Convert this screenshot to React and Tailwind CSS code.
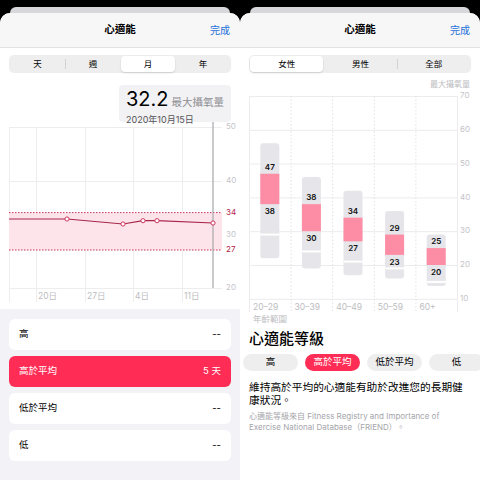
import clsx from "clsx";

const RED = "#ff2d55";

function Sheet({ children }) {
  return (
    <div className="flex h-full w-[240px] flex-col">
      <div className="h-[13px] px-[10px] pt-[7px]">
        <div className="h-[6px] rounded-t-[8px] bg-[#d8d8dc]" />
      </div>
      <div className="flex flex-1 flex-col overflow-hidden rounded-t-[10px] bg-white">{children}</div>
    </div>
  );
}

function Header() {
  return (
    <div className="grid h-[35px] grid-cols-3 items-center border-b border-[#e2e2e4] bg-[#f7f7f7] px-[10px]">
      <span />
      <span className="text-center text-[10.5px] font-semibold text-black">心適能</span>
      <span className="text-right text-[10px] text-[#1d6fd8]">完成</span>
    </div>
  );
}

function Segmented({ items, active }) {
  return (
    <div className="px-[9px] pt-[7px]">
      <div className="flex h-[18px] rounded-[5px] bg-[#eeeeef] p-[1px]">
        {items.map((it, i) => (
          <div key={it} className="flex flex-1 items-center">
            {i > 0 && (
              <div
                className={clsx(
                  "h-[10px] w-px",
                  i !== active && i - 1 !== active ? "bg-[#d2d2d6]" : "bg-transparent"
                )}
              />
            )}
            <div
              className={clsx(
                "flex h-full flex-1 items-center justify-center text-[8.5px] text-black",
                i === active && "rounded-[4px] bg-white shadow-[0_1px_2px_rgba(0,0,0,0.15)]"
              )}
            >
              {it}
            </div>
          </div>
        ))}
      </div>
    </div>
  );
}

function LeftChart() {
  const pts = [
    [9, 219],
    [67, 219],
    [123, 224],
    [143, 220.7],
    [157, 220.7],
    [213, 223],
  ];
  const yLabels = [
    ["50", 127, "#c4c4c8"],
    ["40", 181, "#c4c4c8"],
    ["34", 213, "#b3234a"],
    ["30", 234.5, "#c4c4c8"],
    ["27", 250, "#b3234a"],
    ["20", 288, "#c4c4c8"],
  ];
  const xLabels = [
    ["20日", 38],
    ["27日", 87],
    ["4日", 135],
    ["11日", 184],
  ];
  return (
    <svg width="240" height="187" viewBox="0 122 240 187" className="block">
      {[127.5, 181.5, 288.5].map((y) => (
        <line key={y} x1="9" x2="222" y1={y} y2={y} stroke="#ededee" strokeWidth="1" />
      ))}
      {[9.5, 36.5, 85.5, 133.5, 182.5].map((x) => (
        <line key={x} x1={x} x2={x} y1="127" y2="302" stroke="#ededee" strokeWidth="1" />
      ))}
      <rect x="9" y="212.6" width="213" height="37.4" fill="#fde4ea" />
      <line x1="9" x2="222" y1="212.6" y2="212.6" stroke="#c7335c" strokeWidth="1" strokeDasharray="1.5 1.5" />
      <line x1="9" x2="222" y1="250" y2="250" stroke="#c7335c" strokeWidth="1" strokeDasharray="1.5 1.5" />
      <line x1="213" x2="213" y1="122" y2="288" stroke="#adadb1" strokeWidth="1.3" />
      <polyline points={pts.map((p) => p.join(",")).join(" ")} fill="none" stroke="#a8264b" strokeWidth="1.2" />
      {pts.slice(1).map(([x, y]) => (
        <circle key={x} cx={x} cy={y} r="2.1" fill="white" stroke="#d0365f" strokeWidth="1" />
      ))}
      {yLabels.map(([t, y, c]) => (
        <text key={t} x="226" y={y} fontSize="8" fill={c} dominantBaseline="middle">
          {t}
        </text>
      ))}
      {xLabels.map(([t, x]) => (
        <text key={t} x={x} y="297" fontSize="8.5" fill="#bdbdc1" dominantBaseline="middle">
          {t}
        </text>
      ))}
    </svg>
  );
}

const bars = [
  { top: 56, bottom: 22, hi: 47, lo: 38, gap: 29, label: "20–29" },
  { top: 46, bottom: 19, hi: 38, lo: 30, gap: 24, label: "30–39" },
  { top: 42, bottom: 17, hi: 34, lo: 27, gap: 21, label: "40–49" },
  { top: 36, bottom: 16, hi: 29, lo: 23, gap: 19, label: "50–59" },
  { top: 29, bottom: 13.8, hi: 25, lo: 20, gap: 15, label: "60+" },
];

const vy = (v) => 96 + (70 - v) * 3.38;

function RightChart() {
  const colW = 41.6;
  return (
    <svg width="240" height="252" viewBox="240 73 240 252" className="block">
      <text x="470" y="84.5" fontSize="8" fill="#bdbdc1" textAnchor="end" dominantBaseline="middle">
        最大攝氧量
      </text>
      {[70, 60, 50, 40, 30, 20, 10].map((v) => (
        <g key={v}>
          <line x1="249" x2="457" y1={vy(v) + 0.5} y2={vy(v) + 0.5} stroke="#ececee" strokeWidth="1" />
          <text x="460" y={vy(v)} fontSize="8" fill="#c4c4c8" dominantBaseline="middle">
            {v}
          </text>
        </g>
      ))}
      <line x1="249.5" x2="249.5" y1="96" y2="312" stroke="#ececee" strokeWidth="1" />
      <line x1="457.5" x2="457.5" y1="96" y2="312" stroke="#ececee" strokeWidth="1" />
      {[1, 2, 3, 4].map((i) => (
        <line
          key={i}
          x1={249.5 + colW * i}
          x2={249.5 + colW * i}
          y1="96"
          y2="312"
          stroke="#e2e2e5"
          strokeWidth="1"
          strokeDasharray="1.5 2"
        />
      ))}
      {bars.map((b, i) => {
        const cx = 249 + colW * i + colW / 2;
        const x = cx - 9.5;
        return (
          <g key={b.label}>
            <rect x={x} y={vy(b.top)} width="19" height={vy(b.bottom) - vy(b.top)} rx="3" fill="#e5e5ea" />
            <rect x={x} y={vy(b.gap) - 1} width="19" height="2" fill="white" />
            <rect x={x} y={vy(b.hi)} width="19" height={vy(b.lo) - vy(b.hi)} fill="#fd8da4" />
            <text x={cx} y={vy(b.hi) - 6} fontSize="8" fontWeight="600" fill="#111" textAnchor="middle" dominantBaseline="middle">
              {b.hi}
            </text>
            <text x={cx} y={vy(b.lo) + 7.5} fontSize="8" fontWeight="600" fill="#111" textAnchor="middle" dominantBaseline="middle">
              {b.lo}
            </text>
            <text x={249 + colW * i + 4} y="308" fontSize="8.5" fill="#bdbdc1" dominantBaseline="middle">
              {b.label}
            </text>
          </g>
        );
      })}
      <text x="253" y="319.5" fontSize="8.5" fill="#bdbdc1" dominantBaseline="middle">
        年齡範圍
      </text>
    </svg>
  );
}

const rows = [
  { name: "高", value: "--" },
  { name: "高於平均", value: "5 天", active: true },
  { name: "低於平均", value: "--" },
  { name: "低", value: "--" },
];

const pills = ["高", "高於平均", "低於平均", "低"];

export default function App() {
  return (
    <div className="flex h-[480px] w-[480px] overflow-hidden bg-black font-[Inter,'Noto_Sans_CJK_TC',sans-serif]">
      <Sheet>
        <Header />
        <Segmented items={["天", "週", "月", "年"]} active={2} />
        <div className="flex justify-end pr-[9px] pt-[12px]">
          <div className="h-[37px] w-[112px] rounded-[4px] bg-[#f2f2f4] pl-[7px] pt-[3px]">
            <div className="flex items-baseline gap-[3px] leading-[22px]">
              <span className="text-[20px] text-black">32.2</span>
              <span className="text-[10.5px] text-[#8e8e93]">最大攝氧量</span>
            </div>
            <div className="text-[9px] leading-[11px] text-[#555558]">2020年10月15日</div>
          </div>
        </div>
        <LeftChart />
        <div className="flex flex-1 flex-col gap-[6px] bg-[#f2f2f7] px-[9px] pt-[10px]">
          {rows.map((r) => (
            <div
              key={r.name}
              className={clsx(
                "flex h-[31px] items-center justify-between rounded-[6px] px-[10px] text-[9.5px]",
                r.active ? "bg-[#ff2d55] text-white" : "bg-white text-black"
              )}
            >
              <span>{r.name}</span>
              <span>{r.value}</span>
            </div>
          ))}
        </div>
      </Sheet>
      <Sheet>
        <Header />
        <Segmented items={["女性", "男性", "全部"]} active={0} />
        <RightChart />
        <div className="flex flex-1 flex-col bg-white">
          <div className="mt-[4px] px-[9px] text-[15px] font-medium leading-[20px] text-black">心適能等級</div>
          <div className="mt-[5px] flex gap-[7px] pl-[3px]">
            {pills.map((p, i) => (
              <div
                key={p}
                className={clsx(
                  "flex h-[17px] w-[55px] shrink-0 items-center justify-center rounded-full text-[9.5px]",
                  i === 1 ? "bg-[#ff2d55] text-white" : "bg-[#eeeeef] text-black"
                )}
              >
                {p}
              </div>
            ))}
          </div>
          <p className="mt-[10px] px-[9px] text-[10.7px] leading-[13px] text-black">
            維持高於平均的心適能有助於改進您的長期健康狀況。
          </p>
          <p className="mt-[4px] px-[9px] text-[8px] leading-[11px] text-[#a5a5aa]">
            心適能等級來自 Fitness Registry and Importance of
            <br />
            Exercise National Database（FRIEND）。
          </p>
        </div>
      </Sheet>
    </div>
  );
}
